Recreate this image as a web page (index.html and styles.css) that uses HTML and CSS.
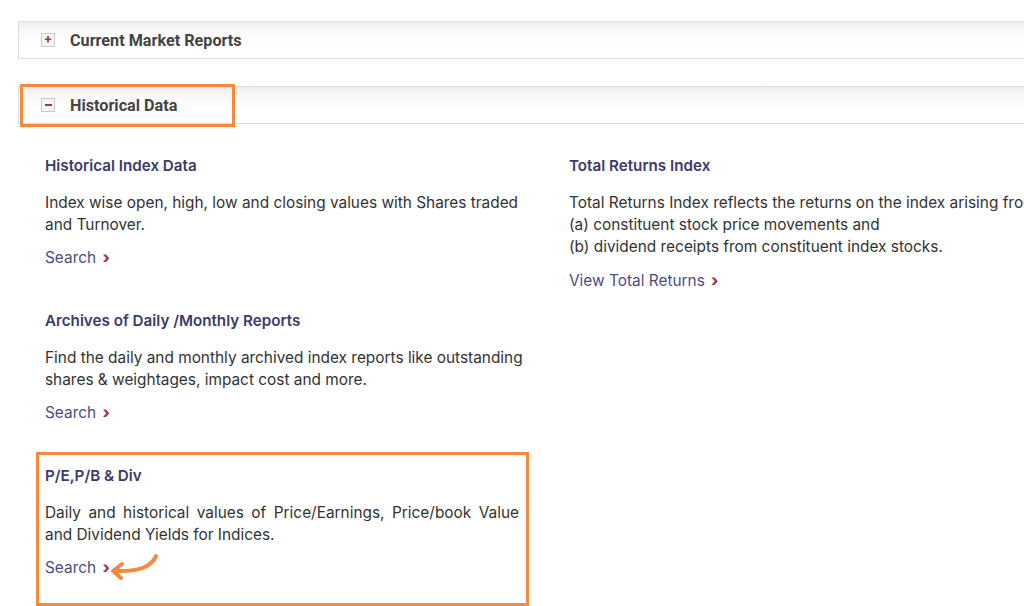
FILE: index.html
```html
<!DOCTYPE html>
<html>
<head>
<meta charset="utf-8">
<link rel="stylesheet" href="styles.css">
</head>
<body>
<div class="page">
  <div class="acc-header">
    <span class="toggle">+</span>
    <span class="acc-title">Current Market Reports</span>
  </div>

  <div class="acc-header acc-open annotated">
    <span class="toggle toggle-minus"></span>
    <span class="acc-title">Historical Data</span>
  </div>

  <div class="acc-body">
    <div class="col">
      <div class="block">
        <h3 class="block-title">Historical Index Data</h3>
        <p class="block-text">Index wise open, high, low and closing values with Shares traded and Turnover.</p>
        <a class="block-link" href="#">Search <span class="chev">›</span></a>
      </div>
      <div class="block">
        <h3 class="block-title">Archives of Daily /Monthly Reports</h3>
        <p class="block-text">Find the daily and monthly archived index reports like outstanding shares &amp; weightages, impact cost and more.</p>
        <a class="block-link" href="#">Search <span class="chev">›</span></a>
      </div>
      <div class="block block-hl">
        <h3 class="block-title">P/E,P/B &amp; Div</h3>
        <p class="block-text justify">Daily and historical values of Price/Earnings, Price/book Value and Dividend Yields for Indices.</p>
        <a class="block-link" href="#">Search <span class="chev">›</span></a>
        <svg class="arrow" width="56" height="30" viewBox="0 0 56 30">
          <path d="M50 3 C46 13 34 19 9 18" fill="none" stroke="#f5893d" stroke-width="4" stroke-linecap="round"/>
          <path d="M16 11 L7 18 L15 25" fill="none" stroke="#f5893d" stroke-width="4" stroke-linecap="round" stroke-linejoin="round"/>
        </svg>
      </div>
    </div>
    <div class="col col-right">
      <div class="block">
        <h3 class="block-title">Total Returns Index</h3>
        <p class="block-text nowrap">Total Returns Index reflects the returns on the index arising from<br>(a) constituent stock price movements and<br>(b) dividend receipts from constituent index stocks.</p>
        <a class="block-link" href="#">View Total Returns <span class="chev">›</span></a>
      </div>
    </div>
  </div>
</div>
</body>
</html>
```

FILE: styles.css
```css
html, body {
  margin: 0;
  padding: 0;
  background: #ffffff;
  overflow: hidden;
}

body {
  width: 1024px;
  height: 606px;
  font-family: "Inter", "Roboto", sans-serif;
}

.page {
  padding: 21px 0 0 18px;
  width: 1100px;
}

.acc-header {
  display: flex;
  align-items: center;
  height: 36px;
  border: 1px solid #dedede;
  border-right: none;
  background: linear-gradient(to bottom, #eeeeee 0px, #f8f8f8 8px, #ffffff 22px, #ffffff 100%);
  padding-left: 22px;
  margin-bottom: 27px;
  position: relative;
}

.acc-open {
  margin-bottom: 0;
}

.toggle {
  width: 12px;
  height: 12px;
  border: 1px solid #c9c9c9;
  background: #f5f5f5;
  color: #a5354e;
  font-family: "Roboto", sans-serif;
  font-weight: 700;
  font-size: 13px;
  line-height: 12px;
  display: flex;
  align-items: center;
  justify-content: center;
}

.toggle-minus::after {
  content: "";
  width: 7px;
  height: 2px;
  background: #a5354e;
}

.acc-title {
  margin-left: 15px;
  font-family: "Roboto", sans-serif;
  font-weight: 700;
  font-size: 16.2px;
  color: #444444;
}

.annotated::before {
  content: "";
  position: absolute;
  left: 1px;
  top: -3px;
  width: 209px;
  height: 37px;
  border: 3px solid #f6893c;
  pointer-events: none;
}

.acc-body {
  display: flex;
  gap: 46px;
  padding: 31px 0 0 27px;
}

.col {
  width: 478px;
  flex: none;
}

.col-right {
  width: 520px;
}

.block {
  margin-bottom: 41px;
  position: relative;
}

.block-title {
  margin: 0 0 15px 0;
  font-size: 15.2px;
  line-height: 22px;
  font-weight: 600;
  color: #3d3a6b;
}

.block-text {
  margin: 0 0 10px 0;
  font-size: 15.4px;
  line-height: 22px;
  color: #333333;
}

.justify {
  text-align: justify;
  margin-right: 4px;
}

.nowrap {
  white-space: nowrap;
  margin-bottom: 11px;
}

.block-link {
  display: inline-block;
  font-size: 15.4px;
  line-height: 22px;
  color: #4e4c7f;
  text-decoration: none;
}

.chev {
  color: #a5354e;
  font-weight: 800;
  font-size: 16.5px;
  margin-left: 2px;
}

.block-hl::before {
  content: "";
  position: absolute;
  left: -9px;
  top: -13px;
  right: -6px;
  bottom: -27px;
  border: 3px solid #f6893c;
  pointer-events: none;
}

.arrow {
  position: absolute;
  left: 61px;
  top: 88px;
}
```
